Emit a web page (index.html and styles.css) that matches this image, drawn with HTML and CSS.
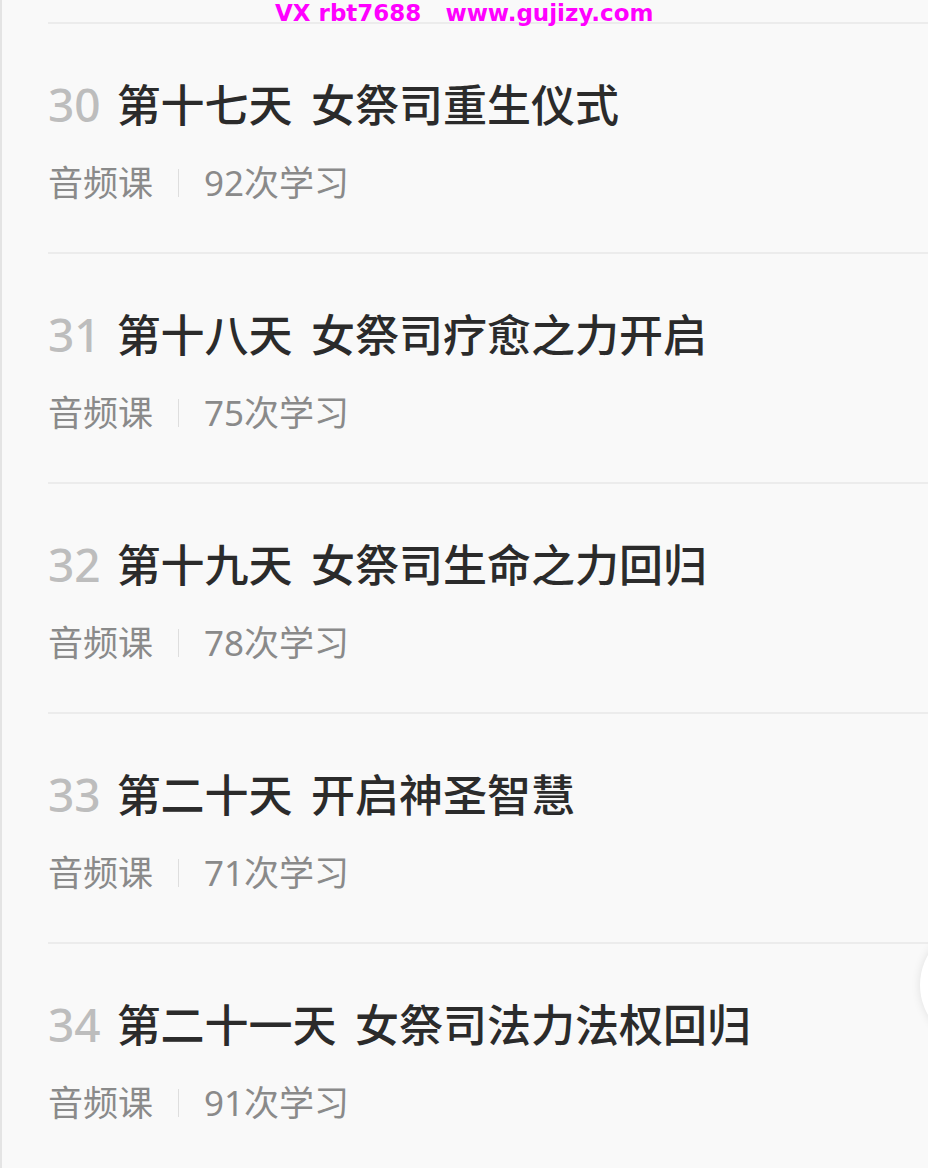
FILE: index.html
```html
<!DOCTYPE html>
<html lang="zh-CN">
<head>
    <meta charset="UTF-8">
    <meta name="viewport" content="width=device-width, initial-scale=1.0">
    <title>课程目录</title>
    <link rel="stylesheet" href="styles.css">
</head>
<body>

    <div class="page">
        <div class="watermark">VX rbt7688&nbsp;&nbsp;&nbsp;www.gujizy.com</div>

        <ul class="lesson-list">
            <li class="lesson">
                <div class="lesson-title"><span class="lesson-no">30</span>第十七天 女祭司重生仪式</div>
                <div class="lesson-meta"><span>音频课</span><i class="meta-divider"></i><span>92次学习</span></div>
            </li>
            <li class="lesson">
                <div class="lesson-title"><span class="lesson-no">31</span>第十八天 女祭司疗愈之力开启</div>
                <div class="lesson-meta"><span>音频课</span><i class="meta-divider"></i><span>75次学习</span></div>
            </li>
            <li class="lesson">
                <div class="lesson-title"><span class="lesson-no">32</span>第十九天 女祭司生命之力回归</div>
                <div class="lesson-meta"><span>音频课</span><i class="meta-divider"></i><span>78次学习</span></div>
            </li>
            <li class="lesson">
                <div class="lesson-title"><span class="lesson-no">33</span>第二十天 开启神圣智慧</div>
                <div class="lesson-meta"><span>音频课</span><i class="meta-divider"></i><span>71次学习</span></div>
            </li>
            <li class="lesson">
                <div class="lesson-title"><span class="lesson-no">34</span>第二十一天 女祭司法力法权回归</div>
                <div class="lesson-meta"><span>音频课</span><i class="meta-divider"></i><span>91次学习</span></div>
            </li>
        </ul>

        <!-- floating button peeking in from the right edge -->
        <div class="float-btn"></div>
    </div>

</body>
</html>
```

FILE: styles.css
```css
/* Basic styles */
body {
    margin: 0;
    padding: 0;
    background-color: #f9f9f9;
    font-family: "Noto Sans", "Noto Sans CJK SC", sans-serif;
    overflow: hidden;
}

.page {
    position: relative;
    height: 1168px;
    overflow: hidden;
    border-left: 2px solid #e4e4e4;
    padding-top: 22px;
    box-sizing: border-box;
}

.watermark {
    position: absolute;
    top: 0;
    left: 273px;
    color: #ff00ff;
    font-family: "DejaVu Sans", sans-serif;
    font-weight: bold;
    font-size: 23px;
    white-space: pre;
}

.lesson-list {
    list-style: none;
    margin: 0;
    padding: 0 0 0 46px;
}

.lesson {
    border-top: 2px solid #ececec;
    height: 230px;
    box-sizing: border-box;
    padding-top: 55px;
}

.lesson-title {
    height: 52px;
    font-size: 44px;
    line-height: 52px;
    font-weight: 500;
    color: #2b2b2b;
    white-space: nowrap;
    word-spacing: 7px;
}

.lesson-no {
    font-size: 46px;
    line-height: 1;
    color: #bdbdbd;
    margin-right: 16px;
}

.lesson-meta {
    display: flex;
    align-items: center;
    margin-top: 32px;
    font-size: 35px;
    line-height: 40px;
    color: #8a8a8a;
}

.meta-divider {
    display: block;
    width: 1px;
    height: 28px;
    margin: 0 25px;
    background-color: #dedede;
}

.float-btn {
    position: absolute;
    left: 918px;
    top: 925px;
    width: 120px;
    height: 120px;
    border-radius: 50%;
    background-color: #ffffff;
    box-shadow: 0 0 10px rgba(0, 0, 0, 0.1);
}
```
